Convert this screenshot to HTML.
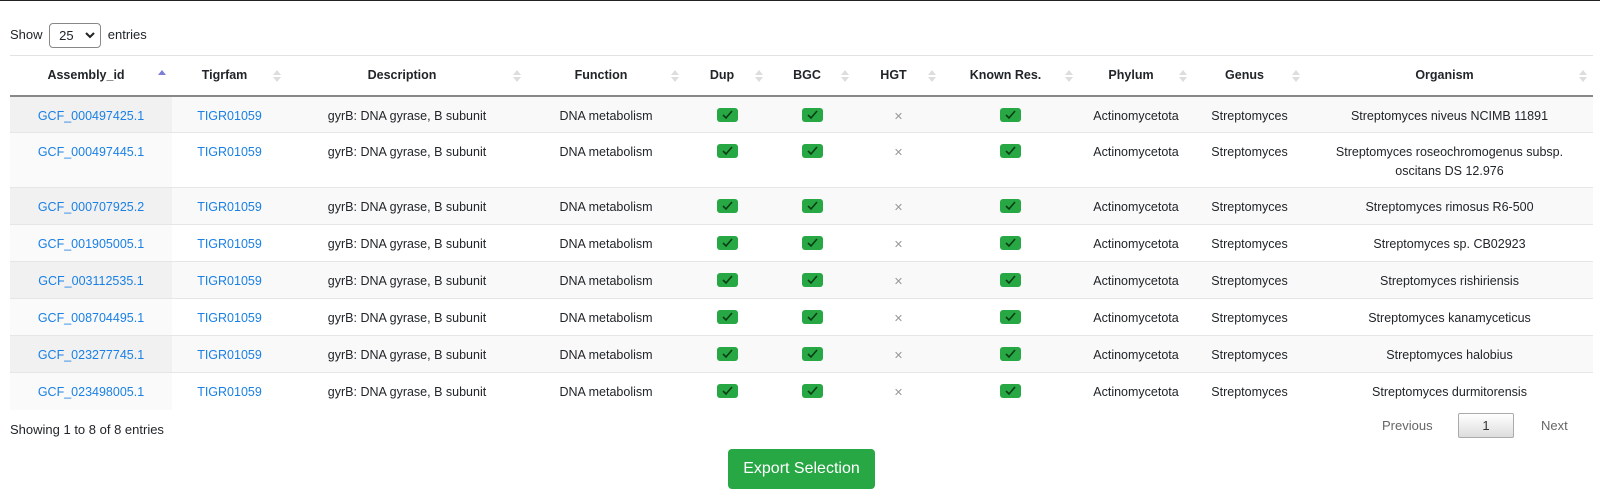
<!DOCTYPE html>
<html><head><meta charset="utf-8"><style>
*{box-sizing:border-box;margin:0;padding:0}
body{width:1600px;height:504px;background:#fff;font-family:"Liberation Sans",sans-serif;font-size:12.5px;color:#212529;position:relative;overflow:hidden;border-top:1px solid #222}
.show{position:absolute;left:10px;top:22px;line-height:22px;font-size:13px}
.sel{display:inline-block;width:52px;height:25px;border:1px solid #888;border-radius:4px;vertical-align:middle;margin:0 3px;position:relative;padding-left:9px;line-height:23px}
.sel svg{position:absolute;right:5px;top:8px}
table{position:absolute;left:10px;top:54px;width:1583px;border-collapse:collapse;table-layout:fixed}
th{height:40px;font-weight:bold;font-size:12.5px;text-align:center;border-top:1px solid #e2e2e2;border-bottom:2px solid #888;position:relative;padding:0 14px 0 4px}
th .ar{position:absolute;right:6px;top:13px;width:8px;height:14px}
td{text-align:center;vertical-align:top;padding:10px 6px 0;line-height:19px;border-top:1px solid #e6e6e6;height:37px}
tr.o td{background:#f9f9f9}
tr.o td:first-child{background:#f1f1f1}
tr.e td:first-child{background:#fafafa}
tr.tall td{height:55px}
a{color:#1a80e5;text-decoration:none}
.ck{display:inline-block;width:21px;height:14px;background:#28a745;border-radius:3px;vertical-align:middle;margin-top:-3px;position:relative}
.ck svg{position:absolute;left:5px;top:2px}
.x{color:#999;font-size:11px}
.info{position:absolute;left:10px;top:420px;font-size:13px;line-height:18px}
.pg{position:absolute;top:412px;font-size:13px;color:#666;line-height:25px}
.b1{position:absolute;left:1458px;top:412px;width:56px;height:25px;border:1px solid #aaa;border-radius:2px;background:linear-gradient(#fff,#ddd);text-align:center;line-height:23px;font-size:13px;color:#333}
.exp{position:absolute;left:728px;top:448px;width:147px;height:40px;background:#28a745;border-radius:4px;color:#fff;font-size:16px;text-align:center;line-height:40px}
</style></head><body>
<div class="show">Show <span class="sel">25<svg width="10" height="7" viewBox="0 0 10 7"><path d="M1 1l4 4 4-4" stroke="#222" stroke-width="2" fill="none"/></svg></span> entries</div>
<table>
<colgroup><col style="width:162px"><col style="width:115px"><col style="width:240px"><col style="width:158px"><col style="width:84px"><col style="width:86px"><col style="width:87px"><col style="width:137px"><col style="width:114px"><col style="width:113px"><col style="width:287px"></colgroup>
<tr>
<th>Assembly_id<svg class="ar" viewBox="0 0 8 14"><path d="M0 6L4 1 8 6z" fill="#7b7fd6"/></svg></th>
<th>Tigrfam<svg class="ar" viewBox="0 0 8 14"><path d="M0 6L4 1 8 6zM0 8L4 13 8 8z" fill="#ddd"/></svg></th>
<th>Description<svg class="ar" viewBox="0 0 8 14"><path d="M0 6L4 1 8 6zM0 8L4 13 8 8z" fill="#ddd"/></svg></th>
<th>Function<svg class="ar" viewBox="0 0 8 14"><path d="M0 6L4 1 8 6zM0 8L4 13 8 8z" fill="#ddd"/></svg></th>
<th>Dup<svg class="ar" viewBox="0 0 8 14"><path d="M0 6L4 1 8 6zM0 8L4 13 8 8z" fill="#ddd"/></svg></th>
<th>BGC<svg class="ar" viewBox="0 0 8 14"><path d="M0 6L4 1 8 6zM0 8L4 13 8 8z" fill="#ddd"/></svg></th>
<th>HGT<svg class="ar" viewBox="0 0 8 14"><path d="M0 6L4 1 8 6zM0 8L4 13 8 8z" fill="#ddd"/></svg></th>
<th>Known Res.<svg class="ar" viewBox="0 0 8 14"><path d="M0 6L4 1 8 6zM0 8L4 13 8 8z" fill="#ddd"/></svg></th>
<th>Phylum<svg class="ar" viewBox="0 0 8 14"><path d="M0 6L4 1 8 6zM0 8L4 13 8 8z" fill="#ddd"/></svg></th>
<th>Genus<svg class="ar" viewBox="0 0 8 14"><path d="M0 6L4 1 8 6zM0 8L4 13 8 8z" fill="#ddd"/></svg></th>
<th>Organism<svg class="ar" viewBox="0 0 8 14"><path d="M0 6L4 1 8 6zM0 8L4 13 8 8z" fill="#ddd"/></svg></th>
</tr>
<tr class="o"><td><a>GCF_000497425.1</a></td><td><a>TIGR01059</a></td><td>gyrB: DNA gyrase, B subunit</td><td>DNA metabolism</td><td><span class="ck"><svg width="11" height="10" viewBox="0 0 11 10"><path d="M1 5l3 3 6-7" stroke="#0b3d14" stroke-width="1.6" fill="none"/></svg></span></td><td><span class="ck"><svg width="11" height="10" viewBox="0 0 11 10"><path d="M1 5l3 3 6-7" stroke="#0b3d14" stroke-width="1.6" fill="none"/></svg></span></td><td><span class="x">✕</span></td><td><span class="ck"><svg width="11" height="10" viewBox="0 0 11 10"><path d="M1 5l3 3 6-7" stroke="#0b3d14" stroke-width="1.6" fill="none"/></svg></span></td><td>Actinomycetota</td><td>Streptomyces</td><td>Streptomyces niveus NCIMB 11891</td></tr>
<tr class="e tall"><td><a>GCF_000497445.1</a></td><td><a>TIGR01059</a></td><td>gyrB: DNA gyrase, B subunit</td><td>DNA metabolism</td><td><span class="ck"><svg width="11" height="10" viewBox="0 0 11 10"><path d="M1 5l3 3 6-7" stroke="#0b3d14" stroke-width="1.6" fill="none"/></svg></span></td><td><span class="ck"><svg width="11" height="10" viewBox="0 0 11 10"><path d="M1 5l3 3 6-7" stroke="#0b3d14" stroke-width="1.6" fill="none"/></svg></span></td><td><span class="x">✕</span></td><td><span class="ck"><svg width="11" height="10" viewBox="0 0 11 10"><path d="M1 5l3 3 6-7" stroke="#0b3d14" stroke-width="1.6" fill="none"/></svg></span></td><td>Actinomycetota</td><td>Streptomyces</td><td>Streptomyces roseochromogenus subsp.<br>oscitans DS 12.976</td></tr>
<tr class="o"><td><a>GCF_000707925.2</a></td><td><a>TIGR01059</a></td><td>gyrB: DNA gyrase, B subunit</td><td>DNA metabolism</td><td><span class="ck"><svg width="11" height="10" viewBox="0 0 11 10"><path d="M1 5l3 3 6-7" stroke="#0b3d14" stroke-width="1.6" fill="none"/></svg></span></td><td><span class="ck"><svg width="11" height="10" viewBox="0 0 11 10"><path d="M1 5l3 3 6-7" stroke="#0b3d14" stroke-width="1.6" fill="none"/></svg></span></td><td><span class="x">✕</span></td><td><span class="ck"><svg width="11" height="10" viewBox="0 0 11 10"><path d="M1 5l3 3 6-7" stroke="#0b3d14" stroke-width="1.6" fill="none"/></svg></span></td><td>Actinomycetota</td><td>Streptomyces</td><td>Streptomyces rimosus R6-500</td></tr>
<tr class="e"><td><a>GCF_001905005.1</a></td><td><a>TIGR01059</a></td><td>gyrB: DNA gyrase, B subunit</td><td>DNA metabolism</td><td><span class="ck"><svg width="11" height="10" viewBox="0 0 11 10"><path d="M1 5l3 3 6-7" stroke="#0b3d14" stroke-width="1.6" fill="none"/></svg></span></td><td><span class="ck"><svg width="11" height="10" viewBox="0 0 11 10"><path d="M1 5l3 3 6-7" stroke="#0b3d14" stroke-width="1.6" fill="none"/></svg></span></td><td><span class="x">✕</span></td><td><span class="ck"><svg width="11" height="10" viewBox="0 0 11 10"><path d="M1 5l3 3 6-7" stroke="#0b3d14" stroke-width="1.6" fill="none"/></svg></span></td><td>Actinomycetota</td><td>Streptomyces</td><td>Streptomyces sp. CB02923</td></tr>
<tr class="o"><td><a>GCF_003112535.1</a></td><td><a>TIGR01059</a></td><td>gyrB: DNA gyrase, B subunit</td><td>DNA metabolism</td><td><span class="ck"><svg width="11" height="10" viewBox="0 0 11 10"><path d="M1 5l3 3 6-7" stroke="#0b3d14" stroke-width="1.6" fill="none"/></svg></span></td><td><span class="ck"><svg width="11" height="10" viewBox="0 0 11 10"><path d="M1 5l3 3 6-7" stroke="#0b3d14" stroke-width="1.6" fill="none"/></svg></span></td><td><span class="x">✕</span></td><td><span class="ck"><svg width="11" height="10" viewBox="0 0 11 10"><path d="M1 5l3 3 6-7" stroke="#0b3d14" stroke-width="1.6" fill="none"/></svg></span></td><td>Actinomycetota</td><td>Streptomyces</td><td>Streptomyces rishiriensis</td></tr>
<tr class="e"><td><a>GCF_008704495.1</a></td><td><a>TIGR01059</a></td><td>gyrB: DNA gyrase, B subunit</td><td>DNA metabolism</td><td><span class="ck"><svg width="11" height="10" viewBox="0 0 11 10"><path d="M1 5l3 3 6-7" stroke="#0b3d14" stroke-width="1.6" fill="none"/></svg></span></td><td><span class="ck"><svg width="11" height="10" viewBox="0 0 11 10"><path d="M1 5l3 3 6-7" stroke="#0b3d14" stroke-width="1.6" fill="none"/></svg></span></td><td><span class="x">✕</span></td><td><span class="ck"><svg width="11" height="10" viewBox="0 0 11 10"><path d="M1 5l3 3 6-7" stroke="#0b3d14" stroke-width="1.6" fill="none"/></svg></span></td><td>Actinomycetota</td><td>Streptomyces</td><td>Streptomyces kanamyceticus</td></tr>
<tr class="o"><td><a>GCF_023277745.1</a></td><td><a>TIGR01059</a></td><td>gyrB: DNA gyrase, B subunit</td><td>DNA metabolism</td><td><span class="ck"><svg width="11" height="10" viewBox="0 0 11 10"><path d="M1 5l3 3 6-7" stroke="#0b3d14" stroke-width="1.6" fill="none"/></svg></span></td><td><span class="ck"><svg width="11" height="10" viewBox="0 0 11 10"><path d="M1 5l3 3 6-7" stroke="#0b3d14" stroke-width="1.6" fill="none"/></svg></span></td><td><span class="x">✕</span></td><td><span class="ck"><svg width="11" height="10" viewBox="0 0 11 10"><path d="M1 5l3 3 6-7" stroke="#0b3d14" stroke-width="1.6" fill="none"/></svg></span></td><td>Actinomycetota</td><td>Streptomyces</td><td>Streptomyces halobius</td></tr>
<tr class="e"><td><a>GCF_023498005.1</a></td><td><a>TIGR01059</a></td><td>gyrB: DNA gyrase, B subunit</td><td>DNA metabolism</td><td><span class="ck"><svg width="11" height="10" viewBox="0 0 11 10"><path d="M1 5l3 3 6-7" stroke="#0b3d14" stroke-width="1.6" fill="none"/></svg></span></td><td><span class="ck"><svg width="11" height="10" viewBox="0 0 11 10"><path d="M1 5l3 3 6-7" stroke="#0b3d14" stroke-width="1.6" fill="none"/></svg></span></td><td><span class="x">✕</span></td><td><span class="ck"><svg width="11" height="10" viewBox="0 0 11 10"><path d="M1 5l3 3 6-7" stroke="#0b3d14" stroke-width="1.6" fill="none"/></svg></span></td><td>Actinomycetota</td><td>Streptomyces</td><td>Streptomyces durmitorensis</td></tr>
</table>
<div class="info">Showing 1 to 8 of 8 entries</div>
<div class="pg" style="left:1382px">Previous</div>
<div class="b1">1</div>
<div class="pg" style="left:1541px">Next</div>
<div class="exp">Export Selection</div>
</body></html>
